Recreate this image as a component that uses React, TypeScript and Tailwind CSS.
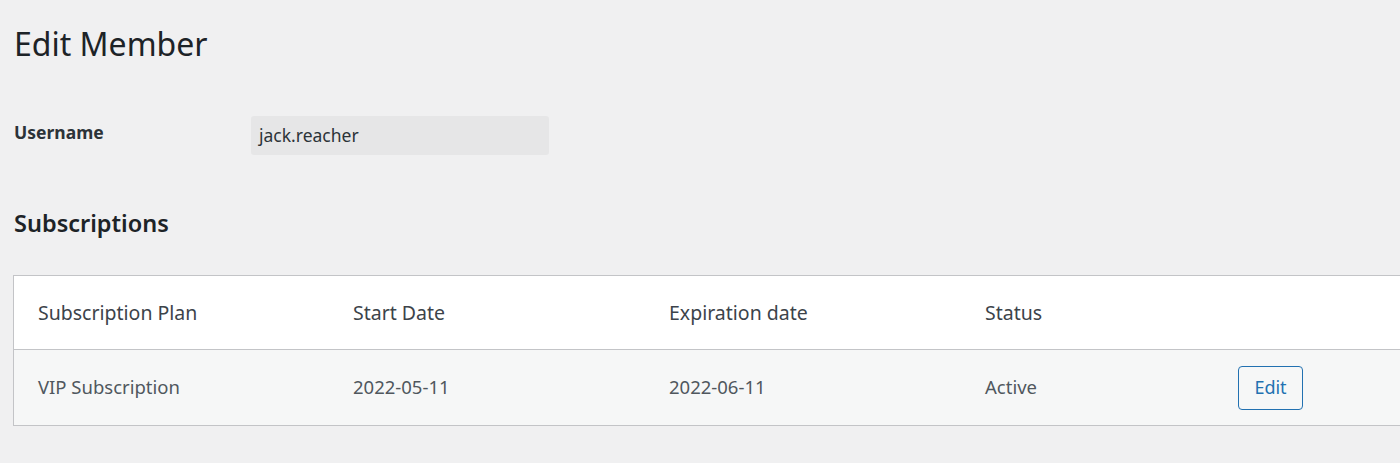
import React from "react";

export default function App() {
  const font = { fontFamily: '"Noto Sans", "Open Sans", sans-serif' };
  return (
    <div className="w-[1400px] h-[463px] overflow-hidden bg-[#f0f0f1] text-[#1d2327]" style={font}>
      <div className="pl-[14px] pt-[22px]">
        <h1 className="text-[32px] leading-[44px] font-normal text-[#1d2327]">Edit Member</h1>
        <div className="mt-[50px] flex items-center">
          <div className="w-[237px] text-[17.5px] font-bold text-[#2c3338] mb-[6px]">Username</div>
          <div className="w-[298px] h-[39px] bg-[#e6e6e7] rounded-[3px] flex items-center pl-[8px] text-[17.5px] text-[#2c3338]">
            jack.reacher
          </div>
        </div>
        <h2 className="mt-[53px] text-[23.5px] font-semibold text-[#1d2327] leading-[30px]">Subscriptions</h2>
        <div className="mt-[37px] w-[1400px] border border-[#c3c4c7] bg-white -ml-[1px]">
          <div className="flex h-[74px] items-center border-b border-[#c3c4c7] text-[19.5px] text-[#3c434a]">
            <div className="w-[339px] pl-[24px]">Subscription Plan</div>
            <div className="w-[316px]">Start Date</div>
            <div className="w-[316px]">Expiration date</div>
            <div className="w-[316px]">Status</div>
          </div>
          <div className="flex h-[75px] items-center bg-[#f6f7f7] text-[18.5px] text-[#50575e]">
            <div className="w-[339px] pl-[24px] mb-[2px]">VIP Subscription</div>
            <div className="w-[316px] mb-[2px]">2022-05-11</div>
            <div className="w-[316px] mb-[2px]">2022-06-11</div>
            <div className="w-[253px] mb-[2px]">Active</div>
            <button className="w-[65px] h-[44px] border border-[#2271b1] rounded-[4px] bg-[#f6f7f7] text-[#2271b1] text-[18px]">
              Edit
            </button>
          </div>
        </div>
      </div>
    </div>
  );
}
